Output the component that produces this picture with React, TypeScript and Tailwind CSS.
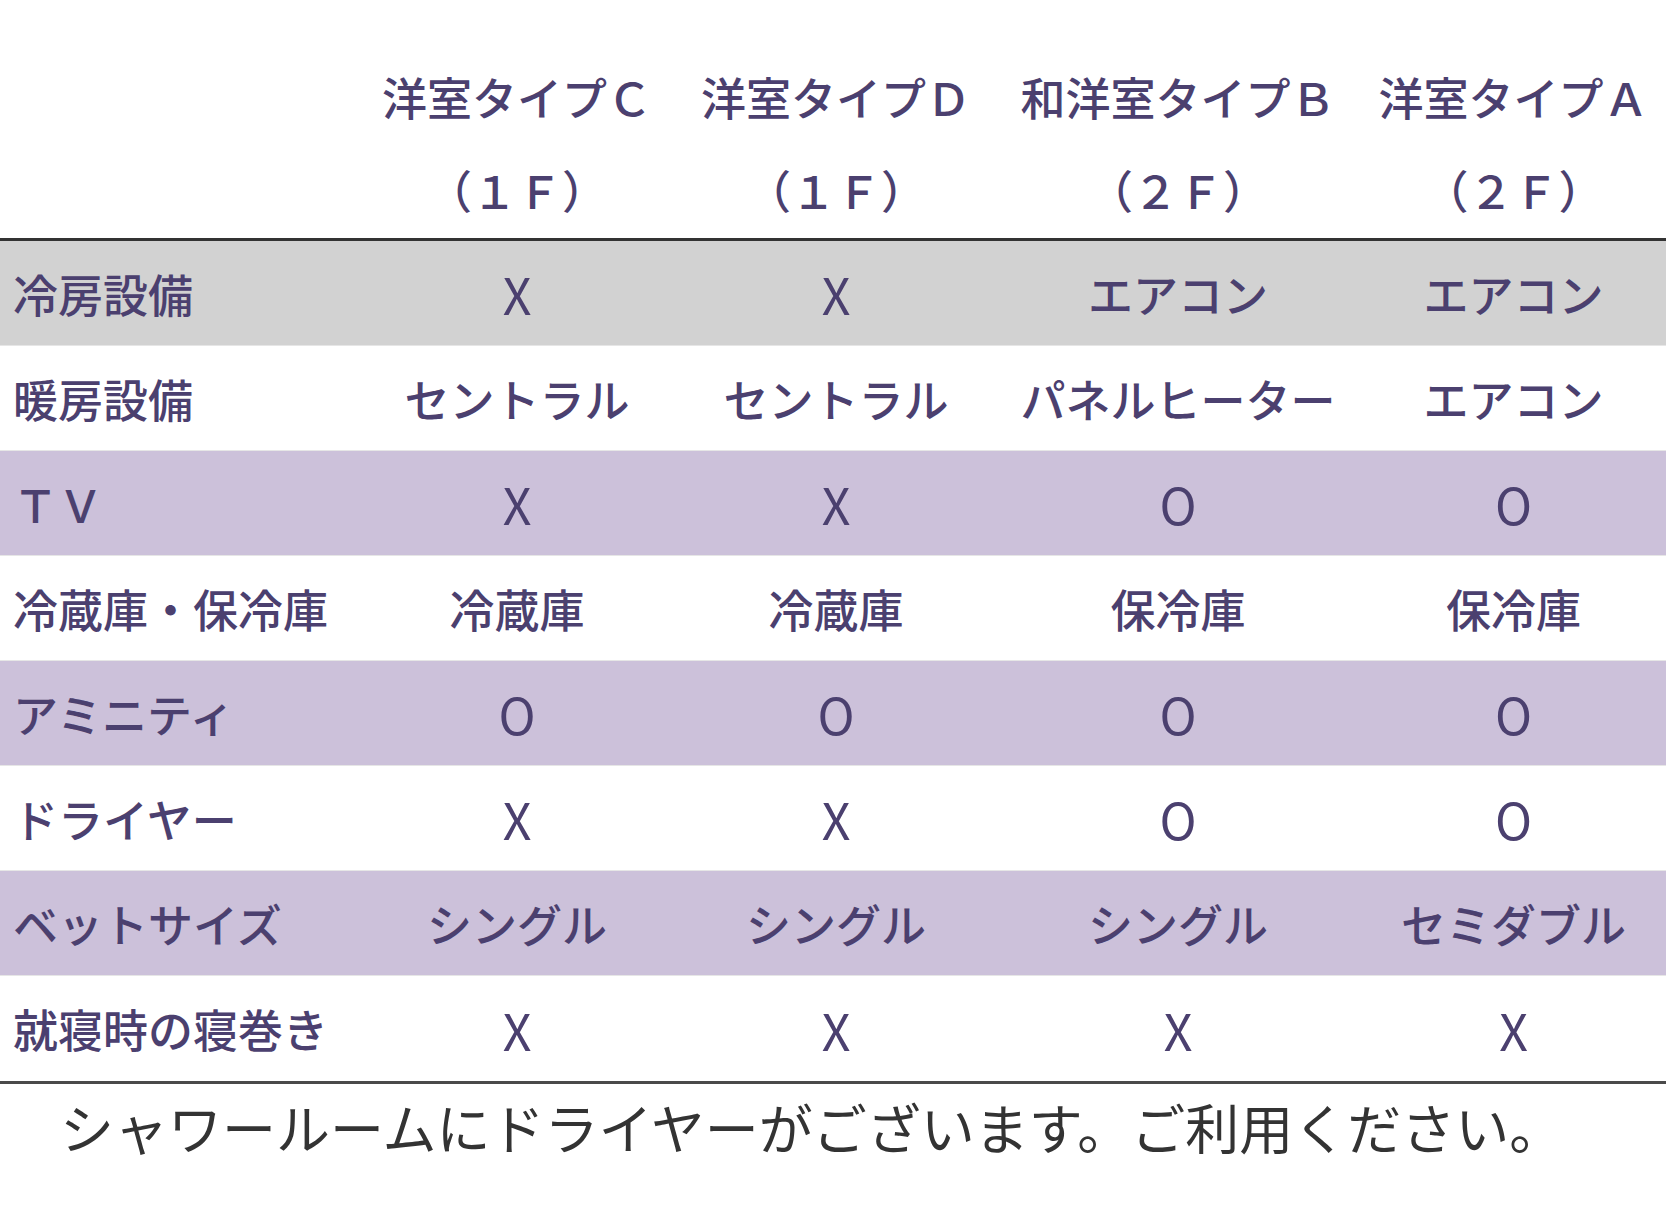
import React from 'react'

const COLS = ['洋室タイプＣ', '洋室タイプＤ', '和洋室タイプＢ', '洋室タイプＡ']
const FLOORS = ['（１Ｆ）', '（１Ｆ）', '（２Ｆ）', '（２Ｆ）']

type Row = { label: string; values: string[]; bg: string }

const ROWS: Row[] = [
  { label: '冷房設備', values: ['X', 'X', 'エアコン', 'エアコン'], bg: 'bg-[#d2d2d2]' },
  { label: '暖房設備', values: ['セントラル', 'セントラル', 'パネルヒーター', 'エアコン'], bg: 'bg-white' },
  { label: 'ＴＶ', values: ['X', 'X', 'O', 'O'], bg: 'bg-[#ccc1da]' },
  { label: '冷蔵庫・保冷庫', values: ['冷蔵庫', '冷蔵庫', '保冷庫', '保冷庫'], bg: 'bg-white' },
  { label: 'アミニティ', values: ['O', 'O', 'O', 'O'], bg: 'bg-[#ccc1da]' },
  { label: 'ドライヤー', values: ['X', 'X', 'O', 'O'], bg: 'bg-white' },
  { label: 'ベットサイズ', values: ['シングル', 'シングル', 'シングル', 'セミダブル'], bg: 'bg-[#ccc1da]' },
  { label: '就寝時の寝巻き', values: ['X', 'X', 'X', 'X'], bg: 'bg-white' },
]

const GRID = 'grid grid-cols-[357px_320px_318px_366px_305px]'

// single-letter marks (X / O) are drawn thinner and a little taller
function Cell({ v }: { v: string }) {
  const mark = v === 'X' || v === 'O'
  return (
    <div className={`text-center whitespace-nowrap ${mark ? 'text-[50px] font-normal' : ''}`}>{v}</div>
  )
}

export default function App() {
  return (
    <div
      className="w-[1666px] h-[1215px] bg-white text-[#4b406f] font-medium overflow-hidden"
      style={{ fontFamily: '"Noto Sans CJK JP", "Noto Sans", sans-serif' }}
    >
      {/* Header */}
      <div className={`${GRID} h-[238px] pt-[50px] text-[45px] leading-[93px]`}>
        <div />
        {COLS.map((c, i) => (
          <div key={c} className="flex flex-col items-center whitespace-nowrap">
            <span>{c}</span>
            <span>{FLOORS[i]}</span>
          </div>
        ))}
      </div>

      {/* Table body */}
      <div className="border-t-[3px] border-b-[3px] border-t-[#333333] border-b-[#4a4a4a]">
        {ROWS.map(r => (
          <div
            key={r.label}
            className={`${GRID} h-[105px] items-center text-[45px] leading-none border-b border-[#e6e6e6] last:border-b-0 ${r.bg}`}
          >
            <div className="pl-[13px] whitespace-nowrap">{r.label}</div>
            {r.values.map((v, i) => (
              <Cell key={i} v={v} />
            ))}
          </div>
        ))}
      </div>

      {/* Footer note */}
      <div className="pl-[60px] text-[54px] leading-[86px] font-normal text-[#333333] whitespace-nowrap">
        シャワールームにドライヤーがございます。ご利用ください。
      </div>
    </div>
  )
}
